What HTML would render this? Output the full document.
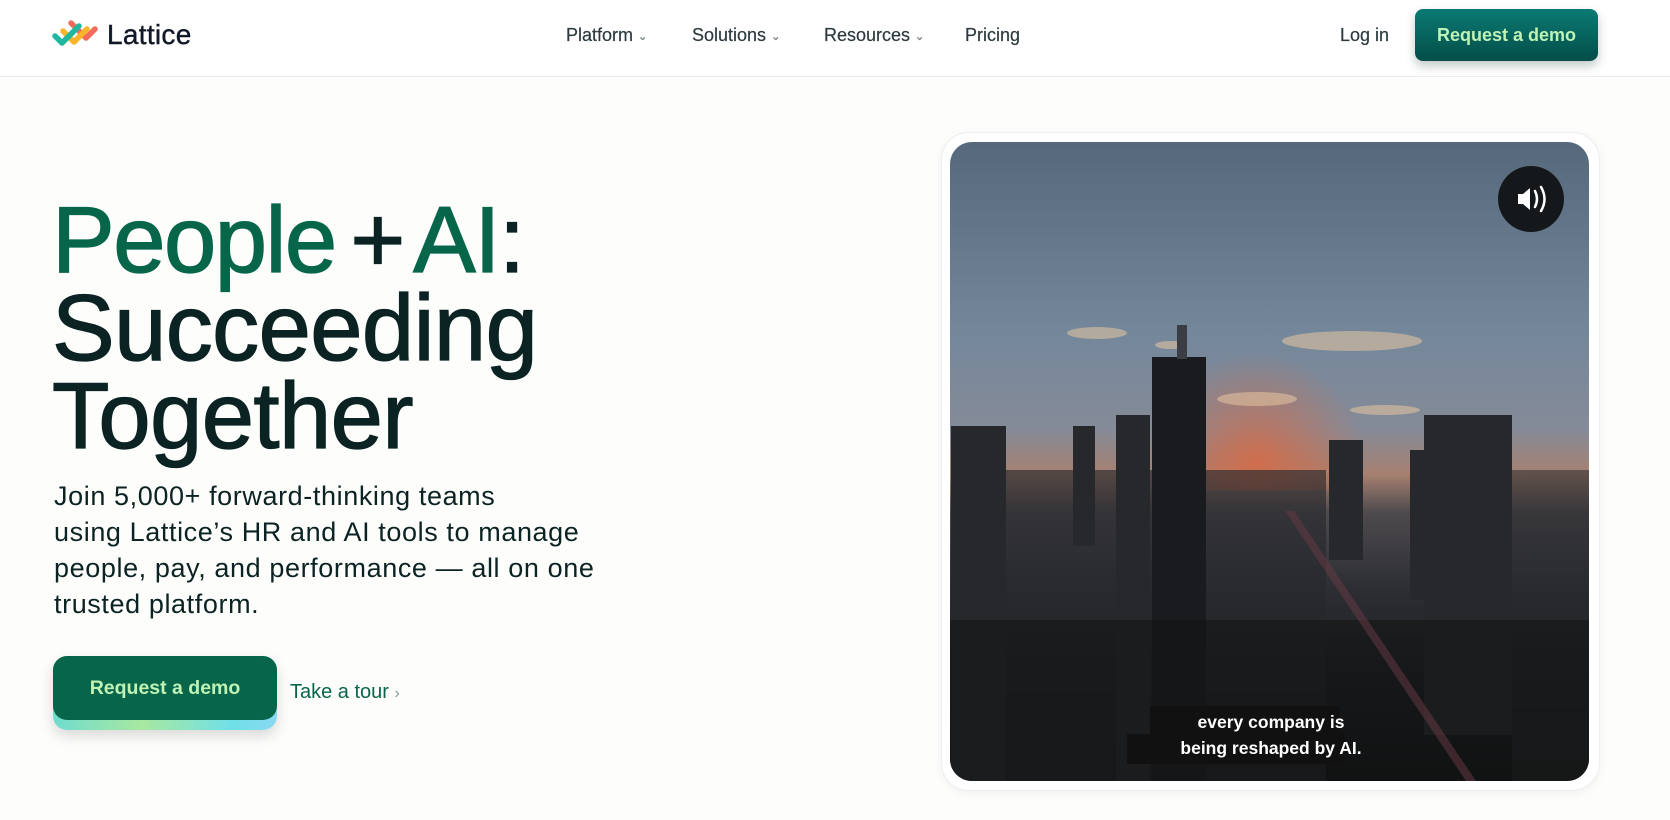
<!DOCTYPE html>
<html><head><meta charset="utf-8"><style>
*{margin:0;padding:0;box-sizing:border-box}
body{width:1670px;height:820px;overflow:hidden;background:#fdfdfc;font-family:"Liberation Sans",sans-serif;position:relative}
.nav{position:absolute;left:0;top:0;width:1670px;height:77px;background:#fff;border-bottom:1px solid #ececec}
.a{position:absolute;white-space:nowrap}
.ni{font-size:18px;color:#2c3a3f;top:25px;-webkit-text-stroke:.2px #2c3a3f}
.chev{font-size:11px;color:#8a9498;margin-left:5px;position:relative;top:-1px}
.btn1{left:1415px;top:9px;width:183px;height:52px;border-radius:8px;background:linear-gradient(#0b7a73,#034e48);color:#bff2b5;font-size:18px;font-weight:bold;text-align:center;line-height:52px;box-shadow:0 5px 10px rgba(0,40,40,.25)}
h1{position:absolute;left:52px;top:196px;font-size:94px;line-height:88px;font-weight:normal;color:#0b2322;letter-spacing:-.6px;-webkit-text-stroke:1.3px #0b2322}
h1 .l1{word-spacing:-10px;letter-spacing:-1.5px}
h1 .g{color:#07664a;-webkit-text-stroke:1.3px #07664a}
.p{left:54px;top:478px;font-size:27px;line-height:36px;color:#0b2322;letter-spacing:.6px}
.b2{left:53px;top:656px;width:224px;height:74px;border-radius:14px;background:linear-gradient(90deg,#6fdccf,#a8e8a0 40%,#6fe0e8 80%,#8ad8f0);box-shadow:0 6px 14px rgba(0,0,0,.15)}
.b2 i{position:absolute;left:0;top:0;width:224px;height:64px;border-radius:14px;background:#07664a;color:#bff2b5;font-style:normal;font-weight:bold;font-size:19.5px;text-align:center;line-height:64px}
.tour{left:290px;top:681px;font-size:20px;color:#07664a}
.card{left:941px;top:132px;width:659px;height:659px;border-radius:28px;background:#fff;border:1px solid #eee;box-shadow:0 2px 10px rgba(0,0,0,.05)}
</style></head><body>
<div class="nav">
<svg class="a" style="left:50px;top:16px" width="50" height="36" viewBox="50 16 50 36" fill="none" stroke-width="5.5" stroke-linecap="round" stroke-linejoin="round">
<path d="M71 23 L86 38 L95 29" stroke="#f26b5b"/>
<path d="M63 31 L74 42 L87 29" stroke="#f9b52a"/>
<path d="M55 36 L62 43 L79 26" stroke="#1fb7a0"/>
</svg>
<div class="a" style="left:107px;top:19px;font-size:28px;color:#111827;letter-spacing:.3px;-webkit-text-stroke:.4px #111827">Lattice</div>
<div class="a ni" style="left:566px">Platform<span class="chev">⌄</span></div>
<div class="a ni" style="left:692px">Solutions<span class="chev">⌄</span></div>
<div class="a ni" style="left:824px">Resources<span class="chev">⌄</span></div>
<div class="a ni" style="left:965px">Pricing</div>
<div class="a ni" style="left:1340px">Log in</div>
<div class="a btn1">Request a demo</div>
</div>
<h1><span class="l1"><span class="g">People</span> + <span class="g">AI</span>:</span><br>Succeeding<br>Together</h1>
<div class="a p">Join 5,000+ forward-thinking teams<br>using Lattice’s HR and AI tools to manage<br>people, pay, and performance — all on one<br>trusted platform.</div>
<div class="a b2"><i>Request a demo</i></div>
<div class="a tour">Take a tour <span style="color:#8a9a95;font-size:16px">›</span></div>
<div class="a card"></div>
<svg class="a" style="left:950px;top:142px;border-radius:22px" width="639" height="639" viewBox="950 142 639 639">
<defs>
<linearGradient id="sky" x1="0" y1="0" x2="0" y2="1">
<stop offset="0" stop-color="#56687b"/><stop offset=".3" stop-color="#74879b"/><stop offset=".45" stop-color="#858b98"/><stop offset=".52" stop-color="#a68070"/><stop offset=".58" stop-color="#4e4a4e"/><stop offset=".7" stop-color="#2c2e33"/><stop offset=".85" stop-color="#1c1d20"/><stop offset="1" stop-color="#121314"/>
</linearGradient>
<radialGradient id="sun" cx="1257" cy="463" r="110" gradientUnits="userSpaceOnUse"><stop offset="0" stop-color="#d86a45" stop-opacity=".85"/><stop offset="1" stop-color="#d86a45" stop-opacity="0"/></radialGradient>
</defs>
<rect x="950" y="142" width="639" height="639" fill="url(#sky)"/>
<rect x="950" y="330" width="639" height="160" fill="url(#sun)"/>
<g fill="#e8c7a0" opacity=".55"><ellipse cx="1097" cy="333" rx="30" ry="6"/><ellipse cx="1352" cy="341" rx="70" ry="10"/><ellipse cx="1257" cy="399" rx="40" ry="7"/><ellipse cx="1385" cy="410" rx="35" ry="5"/><ellipse cx="1170" cy="345" rx="15" ry="4"/></g>
<g fill="#26282c">
<rect x="951" y="426" width="55" height="355"/>
<rect x="1073" y="426" width="22" height="120"/>
<rect x="1116" y="415" width="34" height="366"/>
<rect x="1329" y="440" width="34" height="120"/>
<rect x="1410" y="450" width="14" height="150"/>
<rect x="1424" y="415" width="88" height="320"/>
<rect x="1006" y="470" width="320" height="311" opacity=".65"/>
<rect x="1512" y="470" width="77" height="311" opacity=".55"/>
</g>
<rect x="1152" y="357" width="54" height="424" fill="#1a1b1f"/>
<rect x="1177" y="325" width="10" height="34" fill="#3a3d44"/>
<rect x="950" y="620" width="639" height="161" fill="#111213" opacity=".55"/>
<path d="M1285 511 L1466 781 L1476 781 L1294 511Z" fill="#6a3a45" opacity=".5"/>
<rect x="1150" y="706" width="190" height="30" fill="#111"/>
<rect x="1127" y="734" width="218" height="30" fill="#111"/>
<text x="1271" y="728" fill="#fff" font-family="Liberation Sans" font-weight="bold" font-size="17.5" text-anchor="middle">every company is</text>
<text x="1271" y="754" fill="#fff" font-family="Liberation Sans" font-weight="bold" font-size="17.5" text-anchor="middle">being reshaped by AI.</text>
<circle cx="1531" cy="199" r="33" fill="#15181b"/>
<path d="M1518 194 h5 l7 -6 v22 l-7 -6 h-5z" fill="#fff"/>
<path d="M1535 191 q4 8 0 16 M1541 187 q7 12 0 24" stroke="#fff" stroke-width="2.5" fill="none" stroke-linecap="round"/>
</svg>
</body></html>
